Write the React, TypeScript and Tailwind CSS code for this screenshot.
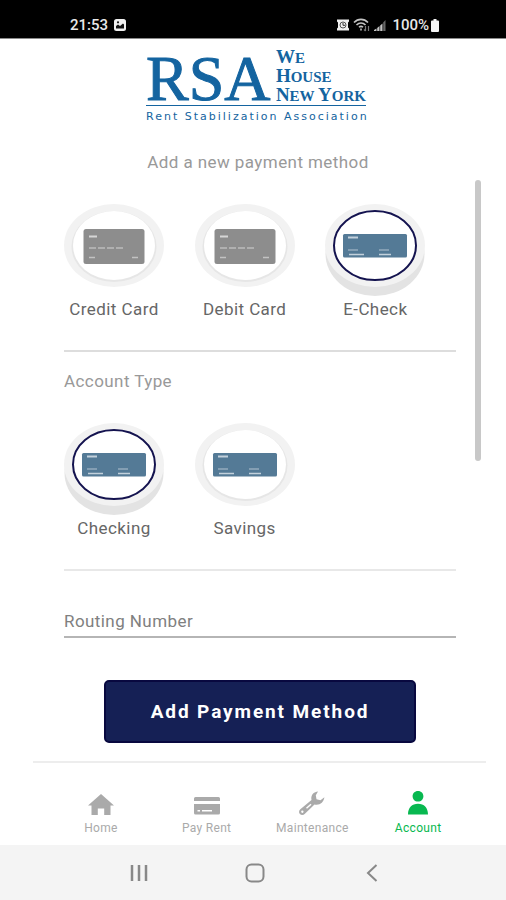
import { useState } from "react";

type CardKind = "card" | "check";
type Option = { id: string; label: string; kind: CardKind };

const methods: Option[] = [
  { id: "credit", label: "Credit Card", kind: "card" },
  { id: "debit", label: "Debit Card", kind: "card" },
  { id: "echeck", label: "E-Check", kind: "check" },
];

const accountTypes: Option[] = [
  { id: "checking", label: "Checking", kind: "check" },
  { id: "savings", label: "Savings", kind: "check" },
];

function CardArt() {
  return (
    <g>
      <rect x="19.500" y="25" width="61" height="35" rx="2.500" fill="#8d8d8d" />
      <path d="M25 32.500h8" stroke="#d6d6d6" strokeWidth="2" />
      <path d="M25 44h7m2 0h7m2 0h7m2 0h7" stroke="#b0b0b0" strokeWidth="2" />
      <path d="M25 53.500h6m37 0h6" stroke="#c2c2c2" strokeWidth="1.500" />
    </g>
  );
}

function CheckArt() {
  return (
    <g>
      <rect x="18" y="30" width="64" height="23.500" rx="1.500" fill="#547a96" />
      <path d="M23 33.500h10" stroke="#c3d1dc" strokeWidth="2" />
      <path d="M23 46h10m21 0h10" stroke="#93abbd" strokeWidth="1.500" />
      <path d="M24 50.500h15m15 0h12" stroke="#c3d1dc" strokeWidth="1.500" />
    </g>
  );
}

function Tile({ kind, selected }: { kind: CardKind; selected: boolean }) {
  return (
    <svg viewBox="0 0 100 93" className="w-[100px] h-[93px]" aria-hidden="true">
      {selected && <ellipse cx="50" cy="50" rx="49.500" ry="42" fill="#e3e3e3" />}
      <ellipse cx="50" cy="41.500" rx="50" ry="41.500" fill="#f2f2f2" />
      {!selected && <ellipse cx="50" cy="42.500" rx="42.500" ry="35.500" fill="#e6e6e6" />}
      <ellipse
        cx="50"
        cy="41.500"
        rx="41"
        ry="34.500"
        fill="#fff"
        stroke={selected ? "#14134f" : "none"}
        strokeWidth="2"
      />
      {kind === "card" ? <CardArt /> : <CheckArt />}
    </svg>
  );
}

function OptionGroup({
  name,
  legend,
  options,
  value,
  onChange,
}: {
  name: string;
  legend: string;
  options: Option[];
  value: string;
  onChange: (id: string) => void;
}) {
  return (
    <div role="radiogroup" aria-label={legend} className="grid grid-cols-3">
      {options.map((o) => (
        <label
          key={o.id}
          className="relative flex w-[100px] flex-col items-center cursor-pointer"
        >
          <input
            type="radio"
            name={name}
            checked={value === o.id}
            onChange={() => onChange(o.id)}
            className="sr-only"
          />
          <Tile kind={o.kind} selected={value === o.id} />
          <span className="whitespace-nowrap text-[17px] leading-6 tracking-wide text-[#666]">
            {o.label}
          </span>
        </label>
      ))}
    </div>
  );
}

function StatusBar() {
  return (
    <div className="flex h-[39px] items-end justify-between border-b border-[#8a8a8a] bg-black pl-[70px] pr-[67px] pb-[3px] text-[#e8e8e8]">
      <div className="flex items-center gap-1.5 text-[15px] leading-5 font-medium">
        <span>21:53</span>
        <svg viewBox="0 0 12 12" className="size-3">
          <rect width="12" height="12" rx="2.500" fill="#f0f0f0" />
          <path d="M2 9.500V7l2-1.500L6 7l3-2.500 1 1v4z" fill="#111" />
          <circle cx="4" cy="3.300" r="1.100" fill="#111" />
        </svg>
      </div>
      <div className="flex items-center gap-1 text-[15px] leading-5 font-medium">
        <svg viewBox="0 0 12 12" className="size-3">
          <path d="M0 .5h12v2l-1 1v5l1 1v2H0v-2l1-1v-5l-1-1z" fill="#f0f0f0" />
          <circle cx="6" cy="6" r="3" fill="#f0f0f0" stroke="#555" strokeWidth="1" />
          <path d="M6 4V6.300h2" stroke="#333" strokeWidth="1" fill="none" />
        </svg>
        <svg viewBox="0 0 17 14" className="w-[17px] h-[14px]" fill="none" stroke="#c4c4c4" strokeWidth="1.600">
          <path d="M1 4.500C5 .300 11 .300 15 4.500M3.500 7c2.600-2.600 6.400-2.600 9 0M6 9.300c1.300-1.300 2.700-1.300 4 0" />
          <path d="M8 10.500v2" />
          <path d="M12.500 8v5m-1.500-1.500 1.500 1.500M15.500 13V8" stroke="#777" strokeWidth="1.200" />
        </svg>
        <svg viewBox="0 0 12 12" className="size-3">
          <path d="M0 12h2.500V9.500L0 11zM3.200 12h2.300V7L3.200 9zM6.200 12h2.300V4.500L6.200 6.500z" fill="#c4c4c4" />
          <path d="M9.200 12h2.300V1L9.200 3.500z" fill="#666" />
        </svg>
        <div className="flex items-center gap-0.5 pl-0.5">
          <span>100%</span>
          <svg viewBox="0 0 8 13" className="w-2 h-[13px]">
            <path d="M2.500 0h3v1.500H7a1 1 0 0 1 1 1V12a1 1 0 0 1-1 1H1a1 1 0 0 1-1-1V2.500a1 1 0 0 1 1-1h1.500z" fill="#f5f5f5" />
          </svg>
        </div>
      </div>
    </div>
  );
}

function Logo() {
  return (
    <div className="flex w-[220px] flex-col text-[#1464a0]">
      <div className="flex items-end justify-between border-b border-[#1464a0] font-['Liberation_Serif',serif]">
        <span className="pt-2 text-[64px] leading-[52px] [-webkit-text-stroke:1px_#1464a0]">RSA</span>
        <span className="flex flex-col text-[15px] leading-[18px] font-bold">
          <span><span className="text-[19px]">W</span>E</span>
          <span><span className="text-[19px]">H</span>OUSE</span>
          <span className="whitespace-nowrap">
            <span className="text-[19px]">N</span>EW <span className="text-[19px]">Y</span>ORK
          </span>
        </span>
      </div>
      <span className="whitespace-nowrap pt-1 font-['DejaVu_Sans',sans-serif] text-[11px] leading-[14px] tracking-[2px]">
        Rent Stabilization Association
      </span>
    </div>
  );
}

const tabs = [
  {
    label: "Home",
    icon: (
      <path d="M13 3 26 14.500h-3.500V24h-6.300v-6.500h-6.400V24H3.500v-9.500H0z" />
    ),
  },
  {
    label: "Pay Rent",
    icon: (
      <path d="M1.500 6h23Q26 6 26 7.500V10H0V7.500Q0 6 1.500 6zM0 13h26v9q0 1.500-1.500 1.500h-23Q0 23.500 0 22zm3.500 6v1.500h2.500V19zm4.500 0v1.500h10V19z" fillRule="evenodd" />
    ),
  },
  {
    label: "Maintenance",
    icon: (
      <path
        d="M19 .5C14.500.8 11.500 4.500 12.500 9L1.300 18.300c-1.600 1.500-1.600 3.400-.4 4.700 1.300 1.300 3.600 1.300 5-.3L15.500 13.500c5 1.200 9.300-2 9.900-7.200L21.500 9.300 17.500 8.200 16.800 4.200zM3.300 19.500a1.200 1.200 0 1 0 .1 2.400 1.200 1.200 0 0 0-.1-2.400zM7 16.700l4.500-4 1 1.100-4.500 4z"
        fillRule="evenodd"
      />
    ),
  },
  {
    label: "Account",
    icon: (
      <path d="M13 0c3.300 0 5.400 2.300 5.400 5.300S16.300 10.600 13 10.600 7.600 8.300 7.600 5.300 9.700 0 13 0zM3 23.500C3 16.500 7 12.700 13 12.700s10 3.800 10 10.800z" />
    ),
  },
];

function TabBar() {
  return (
    <nav className="ml-[33px] mr-5 grid grid-cols-4 border-t-2 border-[#ededed] px-[15px] pt-7 pb-[9px]">
      {tabs.map((tab) => (
        <a
          key={tab.label}
          href={`#${tab.label}`}
          className={`flex flex-col items-center gap-[5px] ${
            tab.label === "Account" ? "text-[#08b850]" : "text-[#aaa]"
          }`}
        >
          <svg viewBox="0 0 26 24" className="w-[26px] h-6" fill="currentColor" aria-hidden="true">
            {tab.icon}
          </svg>
          <span className="whitespace-nowrap text-xs leading-4 tracking-wide">{tab.label}</span>
        </a>
      ))}
    </nav>
  );
}

function SystemBar() {
  return (
    <div className="grid flex-1 grid-cols-3 bg-[#f4f4f4] pl-[81px] pr-[76px] min-h-[55px] text-[#888]">
      <button aria-label="Recents" className="flex items-center justify-center">
        <svg viewBox="0 0 18 18" className="size-[18px]" stroke="currentColor" strokeWidth="2.500">
          <path d="M2 1v16M9 1v16M16 1v16" />
        </svg>
      </button>
      <button aria-label="Home screen" className="flex items-center justify-center">
        <svg viewBox="0 0 20 20" className="size-5" fill="none" stroke="currentColor" strokeWidth="2">
          <rect x="1.500" y="1.500" width="17" height="17" rx="5" />
        </svg>
      </button>
      <button aria-label="Back" className="flex items-center justify-center">
        <svg viewBox="0 0 12 18" className="w-3 h-[18px]" fill="none" stroke="currentColor" strokeWidth="2">
          <path d="M10.500 1 2 9l8.500 8" />
        </svg>
      </button>
    </div>
  );
}

export default function App() {
  const [method, setMethod] = useState("echeck");
  const [accountType, setAccountType] = useState("checking");
  const [routing, setRouting] = useState("");

  return (
    <div className="flex min-h-screen flex-col bg-white font-[Roboto,sans-serif]">
      <StatusBar />

      <header className="flex flex-col items-center pt-1.5 pl-1.5">
        <Logo />
        <h1 className="pt-[26px] pl-1 text-[17px] leading-6 tracking-wide text-[#999]">
          Add a new payment method
        </h1>
      </header>

      <main className="flex flex-col">
        <div className="flex items-start gap-[19px] pt-1.5 pl-16 pr-[25px]">
          <div className="flex-1 pt-6">
            <OptionGroup
              name="method"
              legend="Payment method"
              options={methods}
              value={method}
              onChange={setMethod}
            />
            <hr className="mt-[29px] border-t-2 border-[#ddd]" />
            <h2 className="pt-[17px] pb-[30px] text-[17px] leading-6 tracking-wide text-[#999]">
              Account Type
            </h2>
            <OptionGroup
              name="account-type"
              legend="Account type"
              options={accountTypes}
              value={accountType}
              onChange={setAccountType}
            />
            <hr className="mt-[29px] border-t-2 border-[#e8e8e8]" />
            <input
              type="text"
              aria-label="Routing Number"
              placeholder="Routing Number"
              value={routing}
              onChange={(e) => setRouting(e.target.value)}
              className="mt-[38px] w-full border-b-2 border-[#b5b5b5] pb-[3px] text-[17px] leading-6 tracking-wide text-[#444] outline-none placeholder:text-[#808080]"
            />
          </div>
          {/* Scroll indicator */}
          <div className="h-[281px] w-1.5 rounded-full bg-[#c8c8c8]" />
        </div>

        <button className="mt-[42px] mb-[18px] ml-[104px] mr-[90px] rounded-[5px] border-2 border-[#08083f] bg-[#152055] py-4 text-[19px] leading-[27px] font-bold tracking-widest text-white">
          Add Payment Method
        </button>
      </main>

      <TabBar />
      <SystemBar />
    </div>
  );
}
